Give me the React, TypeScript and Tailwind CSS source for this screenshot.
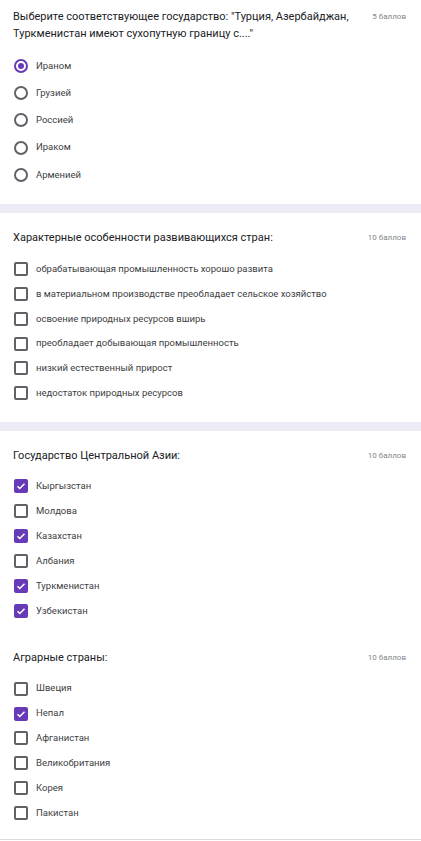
type Option = { label: string; checked?: boolean };

const Radio = ({ checked }: { checked?: boolean }) => (
  <span
    className={`flex h-[14px] w-[14px] shrink-0 items-center justify-center rounded-full border-2 ${
      checked ? "border-[#673ab7]" : "border-[#5f6368]"
    }`}
  >
    {checked && <span className="h-[6px] w-[6px] rounded-full bg-[#673ab7]" />}
  </span>
);

const Checkbox = ({ checked }: { checked?: boolean }) =>
  checked ? (
    <span className="flex h-[14px] w-[14px] shrink-0 items-center justify-center rounded-[2px] bg-[#673ab7]">
      <svg viewBox="0 0 24 24" className="h-[12px] w-[12px]" fill="none" stroke="white" strokeWidth="3">
        <path d="M5 12.5l4.5 4.5L19 7.5" />
      </svg>
    </span>
  ) : (
    <span className="h-[14px] w-[14px] shrink-0 rounded-[2px] border-2 border-[#5f6368]" />
  );

const Question = ({
  title,
  points,
  options,
  type,
  className,
}: {
  title: string;
  points: string;
  options: Option[];
  type: "radio" | "checkbox";
  className?: string;
}) => (
  <section className={`px-[13px] ${className ?? ""}`}>
    <div className="flex items-start justify-between">
      <h2 className="max-w-[345px] text-[11px] leading-[17px] text-[#202124]">{title}</h2>
      <span className="ml-4 shrink-0 pr-[2px] text-[8px] leading-[17px] text-[#80868b]">{points}</span>
    </div>
    <ul className="mt-[10px]">
      {options.map((o) => (
        <li
          key={o.label}
          className={`flex items-center gap-[8px] pl-[1px] ${type === "radio" ? "h-[27.3px]" : "h-[24.9px]"}`}
        >
          {type === "radio" ? <Radio checked={o.checked} /> : <Checkbox checked={o.checked} />}
          <span className="text-[9.5px] text-[#3c4043]">{o.label}</span>
        </li>
      ))}
    </ul>
  </section>
);

const Band = () => <div className="h-[9px] bg-[#ecebf6]" />;

export default function App() {
  return (
    <div className="min-h-[841px] w-[421px] bg-white font-['Roboto','Liberation_Sans',sans-serif]">
      <Question
        className="pt-[8px] pb-[16px]"
        type="radio"
        title={'Выберите соответствующее государство: "Турция, Азербайджан, Туркменистан имеют сухопутную границу с...."'}
        points="5 баллов"
        options={[
          { label: "Ираном", checked: true },
          { label: "Грузией" },
          { label: "Россией" },
          { label: "Ираком" },
          { label: "Арменией" },
        ]}
      />
      <Band />
      <Question
        className="pt-[16px] pb-[16px]"
        type="checkbox"
        title="Характерные особенности развивающихся стран:"
        points="10 баллов"
        options={[
          { label: "обрабатывающая промышленность хорошо развита" },
          { label: "в материальном производстве преобладает сельское хозяйство" },
          { label: "освоение природных ресурсов вширь" },
          { label: "преобладает добывающая промышленность" },
          { label: "низкий естественный прирост" },
          { label: "недостаток природных ресурсов" },
        ]}
      />
      <Band />
      <Question
        className="pt-[16px] pb-[16px]"
        type="checkbox"
        title="Государство Центральной Азии:"
        points="10 баллов"
        options={[
          { label: "Кыргызстан", checked: true },
          { label: "Молдова" },
          { label: "Казахстан", checked: true },
          { label: "Албания" },
          { label: "Туркменистан", checked: true },
          { label: "Узбекистан", checked: true },
        ]}
      />
      <Question
        className="pt-[10px] pb-[13px] border-b border-[#dadce0]"
        type="checkbox"
        title="Аграрные страны:"
        points="10 баллов"
        options={[
          { label: "Швеция" },
          { label: "Непал", checked: true },
          { label: "Афганистан" },
          { label: "Великобритания" },
          { label: "Корея" },
          { label: "Пакистан" },
        ]}
      />
    </div>
  );
}
